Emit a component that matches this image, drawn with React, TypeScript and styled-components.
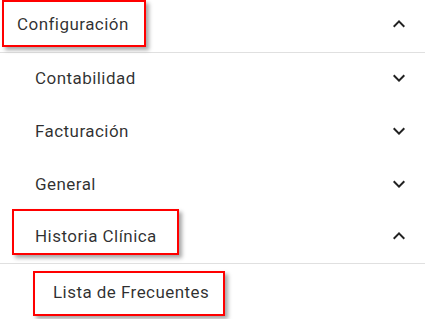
import React from "react";
import styled, { createGlobalStyle, css } from "styled-components";

const Global = createGlobalStyle`
  html, body { margin: 0; padding: 0; background: #fff; }
  body { font-family: Roboto, "Liberation Sans", Arial, sans-serif; }
`;

const Panel = styled.div`
  width: 425px;
  background: #fff;
  color: rgba(0, 0, 0, 0.82);
  font-size: 17px;
  letter-spacing: 0.45px;
  overflow: hidden;
`;

const Row = styled.div<{ $h: number; $indent: number; $pb?: number; $divider?: boolean }>`
  display: flex;
  align-items: center;
  justify-content: space-between;
  box-sizing: border-box;
  height: ${(p) => p.$h}px;
  padding: 0 14px ${(p) => p.$pb ?? 0}px ${(p) => p.$indent}px;
  ${(p) =>
    p.$divider &&
    css`
      border-bottom: 1px solid #e0e0e0;
    `}
`;

type Box = { t: number; r: number; b: number; l: number };

const Label = styled.span<{ $box?: Box }>`
  position: relative;
  line-height: 24px;
  white-space: nowrap;
  ${(p) =>
    p.$box &&
    css`
      &::after {
        content: "";
        position: absolute;
        top: ${p.$box.t}px;
        right: ${p.$box.r}px;
        bottom: ${p.$box.b}px;
        left: ${p.$box.l}px;
        border: 2px solid #ff0000;
        box-shadow: 3px 3px 4px rgba(0, 0, 0, 0.35);
        pointer-events: none;
      }
    `}
`;

const Icon = styled.svg`
  width: 24px;
  height: 24px;
  flex: none;
  fill: rgba(0, 0, 0, 0.87);
`;

const ExpandMore = () => (
  <Icon viewBox="0 0 24 24">
    <path d="M16.59 8.59 12 13.17 7.41 8.59 6 10l6 6 6-6z" />
  </Icon>
);

const ExpandLess = () => (
  <Icon viewBox="0 0 24 24">
    <path d="M12 8l-6 6 1.41 1.41L12 10.83l4.59 4.58L18 14z" />
  </Icon>
);

export default function App() {
  return (
    <>
      <Global />
      <Panel>
        <Row $h={53} $indent={17} $pb={5} $divider>
          <Label $box={{ t: -12, r: -17, b: -11, l: -15 }}>Configuración</Label>
          <ExpandLess />
        </Row>
        <Row $h={53} $indent={35} $pb={3}>
          <Label>Contabilidad</Label>
          <ExpandMore />
        </Row>
        <Row $h={53} $indent={35} $pb={3}>
          <Label>Facturación</Label>
          <ExpandMore />
        </Row>
        <Row $h={53} $indent={35} $pb={3}>
          <Label>General</Label>
          <ExpandMore />
        </Row>
        <Row $h={52} $indent={35} $pb={3} $divider>
          <Label $box={{ t: -15, r: -22, b: -7, l: -23 }}>Historia Clínica</Label>
          <ExpandLess />
        </Row>
        <Row $h={55} $indent={53}>
          <Label $box={{ t: -9, r: -16, b: -12, l: -20 }}>Lista de Frecuentes</Label>
        </Row>
      </Panel>
    </>
  );
}
